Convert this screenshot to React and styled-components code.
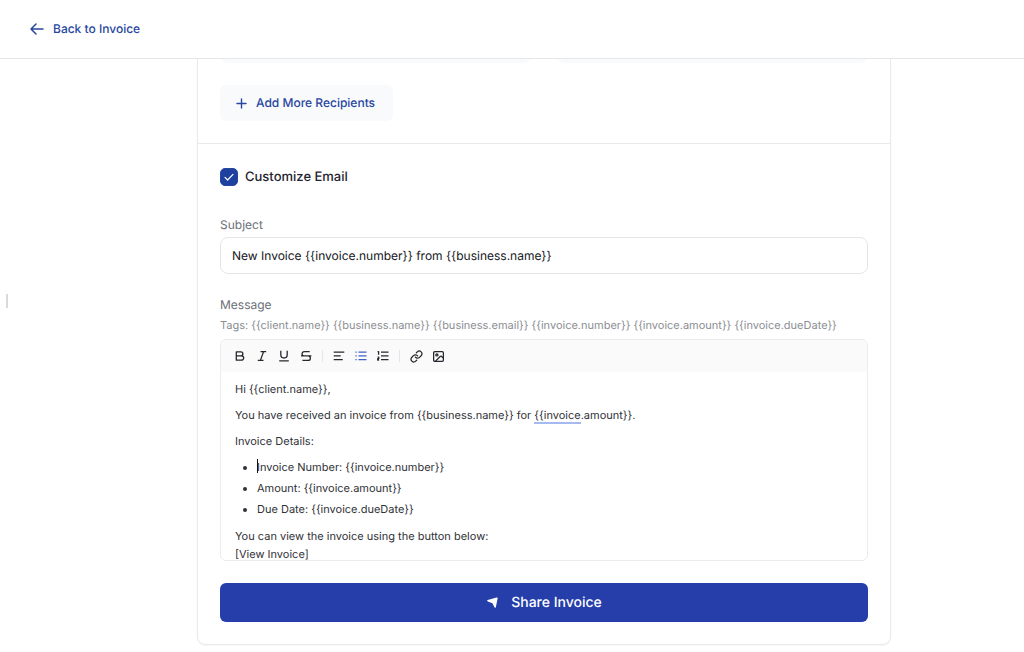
import React from 'react';
import styled, { createGlobalStyle } from 'styled-components';
import { Image, Link } from 'lucide-react';

const GlobalStyle = createGlobalStyle`
  * {
    box-sizing: border-box;
  }

  body {
    margin: 0;
    background: #fff;
    color: #1f2430;
    font-family: Inter, "Liberation Sans", sans-serif;
    font-size: 12px;
    line-height: 18px;
    text-rendering: geometricPrecision;
  }

  button,
  input {
    font: inherit;
    margin: 0;
    text-rendering: inherit;
  }
`;

const Page = styled.div`
  height: 100vh;
  display: flex;
  flex-direction: column;
  overflow: hidden;
`;

const Header = styled.header`
  display: flex;
  align-items: center;
  padding: 20px 28px;
  border-bottom: 1px solid #e5e6e9;
`;

const BackLink = styled.a`
  display: inline-flex;
  align-items: center;
  gap: 7px;
  color: #2746a0;
  font-weight: 500;
  text-decoration: none;
`;

const Body = styled.div`
  flex: 1;
  min-height: 0;
  display: flex;
  align-items: stretch;
`;

const SideRail = styled.aside`
  flex: 0 0 64px;
  display: flex;
  align-items: center;
  padding: 0 6px 110px;
`;

const RailHandle = styled.span`
  width: 2px;
  height: 14px;
  background: #d9dadc;
`;

const Content = styled.main`
  flex: 1;
  min-width: 0;
`;

const Card = styled.section`
  max-width: 694px;
  margin: 0 auto;
  border: 1px solid #e8e9ec;
  border-top: 0;
  border-radius: 0 0 8px 8px;
  box-shadow: 0 1px 2px rgba(0, 0, 0, 0.03);
`;

const Recipients = styled.div`
  padding: 0 22px 22px;
  border-bottom: 1px solid #e8e9ec;
`;

const RecipientRow = styled.div`
  display: flex;
  align-items: flex-end;
  gap: 26px;
  height: 4px;
  margin-bottom: 22px;
  overflow: hidden;
`;

const RecipientInput = styled.input`
  flex: 1;
  min-width: 0;
  height: 36px;
  padding: 0 12px;
  border: 0;
  border-radius: 8px;
  background: #f8fafc;
`;

const AddButton = styled.button`
  display: inline-flex;
  align-items: center;
  gap: 7px;
  height: 36px;
  padding: 0 18px 0 14px;
  border: 0;
  border-radius: 6px;
  background: #f8fafc;
  color: #2746a0;
  font-weight: 500;
`;

const EmailForm = styled.form`
  display: flex;
  flex-direction: column;
  padding: 22px;
`;

const ToggleRow = styled.div`
  display: flex;
  align-items: center;
  gap: 7px;
  height: 22px;
  margin-bottom: 28px;
  font-size: 13px;
  font-weight: 500;
`;

const CheckWrap = styled.span`
  display: grid;
  width: 18px;
  height: 18px;

  > * {
    grid-area: 1 / 1;
  }

  svg {
    place-self: center;
    pointer-events: none;
  }
`;

const Checkbox = styled.input`
  appearance: none;
  width: 18px;
  height: 18px;
  border: 1px solid #2746a0;
  border-radius: 5px;

  &:checked {
    background: #1e409f;
  }

  &:not(:checked) + svg {
    visibility: hidden;
  }
`;

const Label = styled.label`
  margin-bottom: 3px;
  color: #6b6f78;
`;

const SubjectInput = styled.input`
  width: 100%;
  height: 37px;
  margin-bottom: 22px;
  padding: 0 11px;
  border: 1px solid #e5e6e9;
  border-radius: 8px;
  background: #fff;
  color: #14161b;
`;

const Tags = styled.p`
  margin: 0 0 6px;
  color: #8b8e94;
  font-size: 11px;
  line-height: 16px;
`;

const Editor = styled.div`
  height: 222px;
  margin-bottom: 22px;
  border: 1px solid #ebecee;
  border-radius: 6px;
  overflow: hidden;
`;

const Toolbar = styled.div`
  display: flex;
  align-items: center;
  height: 32px;
  padding: 0 8px;
  background: #fafafa;
`;

const ToolButton = styled.button`
  display: grid;
  place-items: center;
  width: 22px;
  height: 24px;
  padding: 0;
  border: 0;
  background: none;
  color: ${({ $active }) => ($active ? '#3f63c4' : '#26282d')};
`;

const Separator = styled.span`
  width: 1px;
  height: 12px;
  margin: 0 5px;
  background: #e4e5e8;
`;

const Message = styled.div`
  padding: 8px 14px;
  color: #303238;
  font-size: 11px;
  outline: none;

  p {
    margin: 0 0 8px;
  }

  ul {
    margin: 0 0 9px;
    padding-left: 22px;
  }

  li {
    margin-bottom: 3px;
  }
`;

const Spelling = styled.span`
  border-bottom: 2px solid #a5bbef;
`;

const Caret = styled.span`
  position: absolute;
  width: 1px;
  height: 14px;
  margin-top: 1px;
  background: #111;
`;

const ShareButton = styled.button`
  display: flex;
  align-items: center;
  justify-content: center;
  gap: 12px;
  width: 100%;
  height: 39px;
  border: 0;
  border-radius: 6px;
  background: #263ea9;
  color: #fff;
  font-size: 14px;
  font-weight: 500;
`;

function ArrowIcon() {
  return (
    <svg width="18" height="18" viewBox="0 0 18 18" fill="none" stroke="currentColor" strokeWidth="1.5" strokeLinecap="round" strokeLinejoin="round">
      <path d="M15 9H3M8 4L3 9l5 5" />
    </svg>
  );
}

function PlusIcon() {
  return (
    <svg width="15" height="15" viewBox="0 0 15 15" fill="none" stroke="currentColor" strokeWidth="1.4" strokeLinecap="round">
      <path d="M7.5 3v9M3 7.5h9" />
    </svg>
  );
}

function CheckIcon() {
  return (
    <svg width="12" height="12" viewBox="0 0 12 12" fill="none" stroke="#fff" strokeWidth="1.2" strokeLinecap="round" strokeLinejoin="round">
      <path d="M2 6.4l2.6 2.6L10 3.4" />
    </svg>
  );
}

function ToolIcon({ children }) {
  return (
    <svg width="14" height="14" viewBox="0 0 14 14" fill="none" stroke="currentColor" strokeWidth="1.3" strokeLinejoin="round">
      {children}
    </svg>
  );
}

function SendIcon() {
  return (
    <svg width="13" height="13" viewBox="0 0 14 14" fill="currentColor">
      <path d="M1.8 4.4L11.4 1.7c.7-.2 1.2.3 1.1 1L10.6 12c-.2.8-1.2.8-1.5.1L6.9 7.8 1.9 5.9c-.8-.3-.8-1.3-.1-1.5z" />
    </svg>
  );
}

const textTools = [
  { name: 'Bold', icon: <ToolIcon><path d="M3.3 2.8h4.6a2 2 0 0 1 0 4H3.3zM3.3 6.8h5.2a2.2 2.2 0 0 1 0 4.4H3.3z" /></ToolIcon> },
  { name: 'Italic', icon: <ToolIcon><path d="M5.5 2.6h5.7M2.8 11.4h5.7M8.6 2.6l-3.2 8.8" /></ToolIcon> },
  { name: 'Underline', icon: <ToolIcon><path d="M3.8 1.8v4a3.2 3.2 0 0 0 6.4 0v-4M2.2 11.8h9.6" /></ToolIcon> },
  { name: 'Strikethrough', icon: <ToolIcon><path d="M10.7 2.6H5.2a2.1 2.1 0 0 0 0 4.3h3.9a2.2 2.2 0 0 1 0 4.5H3.4M2 6.9h10.4" /></ToolIcon> },
];

const blockTools = [
  { name: 'Align left', icon: <ToolIcon><path d="M1.7 3.2h10.6M1.7 6.9h7M1.7 10.6h9" /></ToolIcon> },
  { name: 'Bullet list', icon: <ToolIcon><path d="M4.5 3.2h8M4.5 6.9h8M4.5 10.6h8M1.4 3.2h1.3M1.4 6.9h1.3M1.4 10.6h1.3" /></ToolIcon>, active: true },
  { name: 'Numbered list', icon: <ToolIcon><path d="M5 3.2h7.5M5 6.9h7.5M5 10.6h7.5M1.6 2.6h1v3.2M1.6 8.2h1.2v1.4H1.7V11h1.4" /></ToolIcon> },
];

const insertTools = [
  { name: 'Link', icon: <Link size={13} strokeWidth={2.3} /> },
  { name: 'Image', icon: <Image size={13} strokeWidth={2.3} /> },
];

function ToolGroup({ tools }) {
  return tools.map((tool) => (
    <ToolButton key={tool.name} type="button" aria-label={tool.name} $active={tool.active}>
      {tool.icon}
    </ToolButton>
  ));
}

function App() {
  return (
    <Page>
      <GlobalStyle />
      <Header>
        <BackLink href="#invoice">
          <ArrowIcon />
          Back to Invoice
        </BackLink>
      </Header>
      <Body>
        <SideRail>
          <RailHandle />
        </SideRail>
        <Content>
          <Card>
            <Recipients>
              <RecipientRow>
                <RecipientInput aria-label="Recipient name" />
                <RecipientInput aria-label="Recipient email" />
              </RecipientRow>
              <AddButton type="button">
                <PlusIcon />
                Add More Recipients
              </AddButton>
            </Recipients>
            <EmailForm onSubmit={(e) => e.preventDefault()}>
              <ToggleRow>
                <CheckWrap>
                  <Checkbox id="customize" type="checkbox" defaultChecked />
                  <CheckIcon />
                </CheckWrap>
                <label htmlFor="customize">Customize Email</label>
              </ToggleRow>
              <Label htmlFor="subject">Subject</Label>
              <SubjectInput
                id="subject"
                type="text"
                defaultValue="New Invoice {{invoice.number}} from {{business.name}}"
              />
              <Label as="div" id="message-label">Message</Label>
              <Tags>
                {'Tags: {{client.name}} {{business.name}} {{business.email}} {{invoice.number}} {{invoice.amount}} {{invoice.dueDate}}'}
              </Tags>
              <Editor>
                <Toolbar>
                  <ToolGroup tools={textTools} />
                  <Separator />
                  <ToolGroup tools={blockTools} />
                  <Separator />
                  <ToolGroup tools={insertTools} />
                </Toolbar>
                <Message
                  role="textbox"
                  aria-multiline="true"
                  aria-labelledby="message-label"
                  contentEditable
                  suppressContentEditableWarning
                >
                  <p>{'Hi {{client.name}},'}</p>
                  <p>
                    {'You have received an invoice from {{business.name}} for '}
                    <Spelling>{'{{invoice'}</Spelling>
                    {'.amount}}.'}
                  </p>
                  <p>Invoice Details:</p>
                  <ul>
                    <li><Caret />{'Invoice Number: {{invoice.number}}'}</li>
                    <li>{'Amount: {{invoice.amount}}'}</li>
                    <li>{'Due Date: {{invoice.dueDate}}'}</li>
                  </ul>
                  <p>
                    You can view the invoice using the button below:
                    <br />
                    [View Invoice]
                  </p>
                </Message>
              </Editor>
              <ShareButton type="submit">
                <SendIcon />
                Share Invoice
              </ShareButton>
            </EmailForm>
          </Card>
        </Content>
      </Body>
    </Page>
  );
}

export default App;
